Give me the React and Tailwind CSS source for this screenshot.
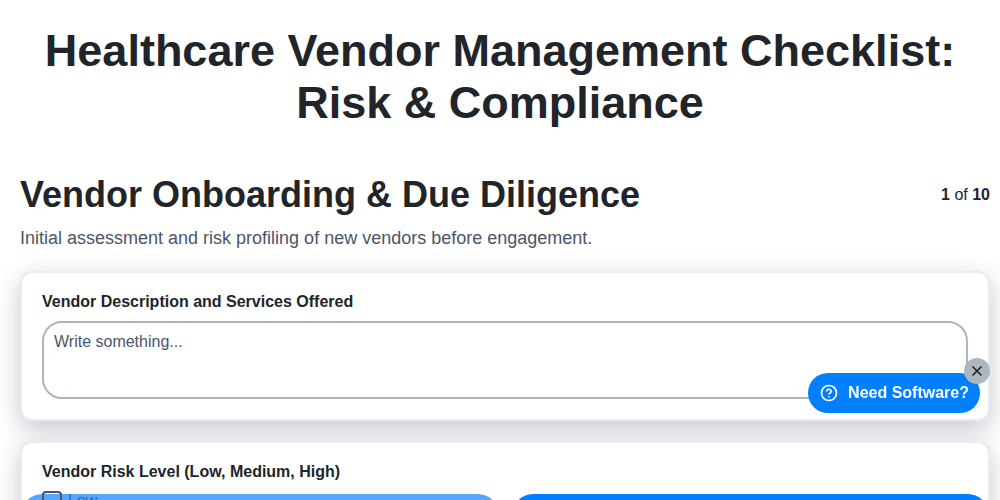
import { CircleHelp, X } from "lucide-react";

const Card = ({ className = "", children }) => (
    <div className={`bg-white rounded-xl border-2 border-[#e9ecef] px-5 pt-[17px] shadow-[0_8px_24px_rgba(40,40,80,0.26)] ${className}`}>
        {children}
    </div>
);

export default function App() {
    return (
        <div className="h-[500px] overflow-hidden bg-white font-['Liberation_Sans',Arial,sans-serif] text-[#212529]">
            <h1 className="px-5 pt-[25px] pb-[44px] text-center text-[45px] leading-[52px] font-bold">
                Healthcare Vendor Management Checklist:
                <br />
                Risk &amp; Compliance
            </h1>

            <div className="pr-2.5 pl-5">
                <div className="flex items-start justify-between">
                    <h2 className="text-[36px] leading-[43px] font-bold">Vendor Onboarding &amp; Due Diligence</h2>
                    <div className="pt-[10px] text-base leading-6">
                        <b>1</b> of <b>10</b>
                    </div>
                </div>
                <p className="mt-[9px] text-lg leading-[27px] text-[#4a5568]">
                    Initial assessment and risk profiling of new vendors before engagement.
                </p>

                <Card className="mt-[19px] h-[150px]">
                    <div className="text-base leading-6 font-bold">Vendor Description and Services Offered</div>
                    <div className="mt-[7px] h-[78px] rounded-[20px] border-2 border-[#adb5bd] px-2.5 py-[7px] text-base leading-6 text-[#4a5568]">
                        Write something...
                    </div>
                </Card>

                <Card className="mt-[20px] h-[150px]">
                    <div className="text-base leading-6 font-bold">Vendor Risk Level (Low, Medium, High)</div>
                    <div className="-mx-5 mt-[10px] grid grid-cols-2 gap-[15px]">
                        <div className="relative h-10 rounded-[20px] bg-[#55a6ff]">
                            <span className="absolute top-[-3px] left-5 h-5 w-5 rounded border-2 border-[#4a5568]"></span>
                            <span className="absolute top-[-5px] left-[46px] text-base leading-6 text-[#2a6fb5]">Low</span>
                        </div>
                        <div className="h-10 rounded-[20px] bg-[#0080ff]"></div>
                    </div>
                </Card>
            </div>

            {/* floating help button */}
            <div className="fixed right-5 bottom-[87px] flex h-10 items-center gap-2 rounded-[20px] bg-[#0080ff] pr-[11px] pl-[12px] text-base font-bold text-white">
                <CircleHelp size={18} strokeWidth={2.25} />
                <span className="ml-[2px]">Need Software?</span>
                <div className="absolute -top-[15px] -right-[10px] flex h-[26px] w-[26px] items-center justify-center rounded-full bg-[#adb5bd] text-[#212529]">
                    <X size={16} strokeWidth={2.5} />
                </div>
            </div>
        </div>
    );
}
